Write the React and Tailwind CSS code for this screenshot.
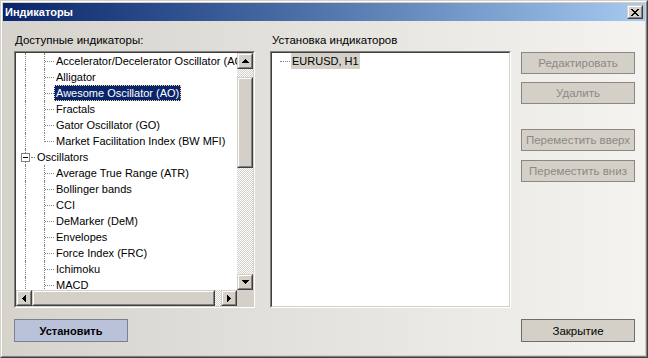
import React from "react";

const dot = "border-dotted border-[#808080]";

function Arrow({ dir }) {
  const rects = {
    up: [[3, 0, 1, 1], [2, 1, 3, 1], [1, 2, 5, 1], [0, 3, 7, 1]],
    down: [[0, 0, 7, 1], [1, 1, 5, 1], [2, 2, 3, 1], [3, 3, 1, 1]],
    left: [[3, 0, 1, 7], [2, 1, 1, 5], [1, 2, 1, 3], [0, 3, 1, 1]],
    right: [[0, 0, 1, 7], [1, 1, 1, 5], [2, 2, 1, 3], [3, 3, 1, 1]],
  }[dir];
  const vert = dir === "up" || dir === "down";
  const w = vert ? 7 : 4;
  const h = vert ? 4 : 7;
  return (
    <svg width={w} height={h} viewBox={`0 0 ${w} ${h}`} shapeRendering="crispEdges">
      {rects.map((r, i) => (
        <rect key={i} x={r[0]} y={r[1]} width={r[2]} height={r[3]} fill="#000" />
      ))}
    </svg>
  );
}

function Raised({ className = "", children }) {
  return (
    <div className={`border border-t-[#d4d0c8] border-l-[#d4d0c8] border-r-[#404040] border-b-[#404040] ${className}`}>
      <div className="w-full h-full border border-t-white border-l-white border-r-[#808080] border-b-[#808080] bg-[#d4d0c8] flex items-center justify-center">
        {children}
      </div>
    </div>
  );
}

const checker =
  "bg-[repeating-conic-gradient(#d4d0c8_0_25%,#ffffff_0_50%)] bg-[length:2px_2px]";

function VLine() {
  return (
    <div className="w-[19px] h-4 shrink-0 flex">
      <div className="w-[9px]" />
      <div className={`w-px h-full border-l ${dot}`} />
    </div>
  );
}

function Branch({ last }) {
  return (
    <div className="w-[19px] h-4 shrink-0 flex items-start">
      <div className="w-[9px] shrink-0" />
      <div className={`w-px shrink-0 ${last ? "h-[9px]" : "h-full"} border-l ${dot}`} />
      <div className={`w-[9px] h-[9px] border-b ${dot}`} />
    </div>
  );
}

function Expander() {
  return (
    <div className="w-[19px] h-4 shrink-0 flex items-start">
      <div className="ml-[5px] w-[9px] h-full flex flex-col items-center shrink-0">
        <div className={`w-px h-[4px] border-l ${dot}`} />
        <div className="w-[9px] h-[9px] border border-[#808080] bg-white flex items-center justify-center shrink-0">
          <div className="w-[5px] h-px bg-black" />
        </div>
        <div className={`w-px flex-1 border-l ${dot}`} />
      </div>
      <div className="w-px shrink-0" />
      <div className={`flex-1 h-[9px] border-b ${dot}`} />
    </div>
  );
}

function Row({ children }) {
  return <div className="flex h-4 items-center whitespace-nowrap">{children}</div>;
}

function Label({ text, selected }) {
  return (
    <span
      className={`px-[2px] h-4 leading-4 whitespace-nowrap ${
        selected
          ? "bg-[#0a246a] text-white outline-1 outline-dotted outline-[#f5db95] -outline-offset-1"
          : "text-black"
      }`}
    >
      {text}
    </span>
  );
}

const group1 = [
  "Accelerator/Decelerator Oscillator (AC)",
  "Alligator",
  "Awesome Oscillator (AO)",
  "Fractals",
  "Gator Oscillator (GO)",
  "Market Facilitation Index (BW MFI)",
];

const oscillators = [
  "Average True Range (ATR)",
  "Bollinger bands",
  "CCI",
  "DeMarker (DeM)",
  "Envelopes",
  "Force Index (FRC)",
  "Ichimoku",
  "MACD",
];

function Sunken({ className = "", children }) {
  return (
    <div className={`border border-t-[#808080] border-l-[#808080] border-r-white border-b-white ${className}`}>
      <div className="w-full h-full border border-t-[#404040] border-l-[#404040] border-r-[#d4d0c8] border-b-[#d4d0c8] bg-white overflow-hidden">
        {children}
      </div>
    </div>
  );
}

function LeftTree() {
  return (
    <Sunken className="w-[241px] h-[257px]">
      <div className="flex flex-col h-full">
        <div className="flex flex-1 min-h-0">
          <div className="flex-1 min-w-0 overflow-hidden">
            {group1.map((t, i) => (
              <Row key={t}>
                <VLine />
                <Branch last={i === group1.length - 1} />
                <Label text={t} selected={t === "Awesome Oscillator (AO)"} />
              </Row>
            ))}
            <Row>
              <Expander />
              <Label text="Oscillators" />
            </Row>
            {oscillators.map((t) => (
              <Row key={t}>
                <VLine />
                <Branch />
                <Label text={t} />
              </Row>
            ))}
          </div>
          <div className="w-4 shrink-0 flex flex-col">
            <Raised className="w-4 h-4 shrink-0">
              <Arrow dir="up" />
            </Raised>
            <div className={`flex-1 ${checker} flex flex-col`}>
              <Raised className="mt-[8px] w-4 h-[91px]" />
            </div>
            <Raised className="w-4 h-4 shrink-0">
              <Arrow dir="down" />
            </Raised>
          </div>
        </div>
        <div className="flex h-4 shrink-0">
          <Raised className="w-4 h-4 shrink-0">
            <Arrow dir="left" />
          </Raised>
          <div className={`flex-1 ${checker} flex`}>
            <Raised className="w-[183px] h-4" />
          </div>
          <Raised className="w-4 h-4 shrink-0">
            <Arrow dir="right" />
          </Raised>
          <div className="w-4 h-4 bg-[#d4d0c8] shrink-0" />
        </div>
      </div>
    </Sunken>
  );
}

function RightTree() {
  return (
    <Sunken className="w-[241px] h-[257px]">
      <Row>
        <div className="w-[8px] shrink-0" />
        <div className={`w-[10px] h-[9px] self-start border-b ${dot}`} />
        <span className="ml-[1px] px-[1px] h-4 leading-4 bg-[#d4d0c8] text-black">EURUSD, H1</span>
      </Row>
    </Sunken>
  );
}

function DisabledBtn({ text, className = "" }) {
  return (
    <div
      className={`w-[114px] h-[22px] border border-[#8a8883] bg-[#d4d0c8] text-[#8b8985] text-[11.5px] flex items-center justify-center ${className}`}
    >
      {text}
    </div>
  );
}

export default function App() {
  return (
    <div className="w-[648px] h-[358px] font-['Liberation_Sans',Arial,sans-serif] text-[11px] leading-[14px] border border-t-[#d4d0c8] border-l-[#d4d0c8] border-r-[#404040] border-b-[#404040]">
      <div className="w-full h-full border border-t-white border-l-white border-r-[#808080] border-b-[#808080] bg-[#d4d0c8] p-px flex flex-col">
        <div className="h-[18px] shrink-0 bg-gradient-to-r from-[#0a246a] to-[#a6caf0] flex items-center justify-between pl-[2px] pr-[2px]">
          <span className="text-white font-bold text-[11px]">Индикаторы</span>
          <Raised className="w-[16px] h-[14px]">
            <svg width="8" height="7" viewBox="0 0 8 7" shapeRendering="crispEdges">
              {[0, 1, 2, 3, 4, 5, 6].map((i) => (
                <React.Fragment key={i}>
                  <rect x={i} y={i} width="2" height="1" fill="#000" />
                  <rect x={6 - i} y={i} width="2" height="1" fill="#000" />
                </React.Fragment>
              ))}
            </svg>
          </Raised>
        </div>
        <div className="flex-1 bg-gradient-to-r from-[#d6d3cd] to-[#f4f3ef] pt-[12px] pl-[11px]">
          <div className="flex">
            <div className="w-[241px] flex flex-col">
              <div className="h-[14px] pl-px text-black text-[11.5px]">Доступные индикаторы:</div>
              <div className="mt-[4px]">
                <LeftTree />
              </div>
              <div className="mt-[11px] w-[114px] h-[23px] bg-[#bac2d9] border border-[#7b8090] flex items-center justify-center font-bold text-black">
                Установить
              </div>
            </div>
            <div className="ml-[15px] w-[241px] flex flex-col">
              <div className="h-[14px] pl-[2px] text-black text-[11.5px]">Установка индикаторов</div>
              <div className="mt-[4px]">
                <RightTree />
              </div>
            </div>
            <div className="ml-[10px] w-[114px] flex flex-col pt-[19px]">
              <DisabledBtn text="Редактировать" />
              <DisabledBtn text="Удалить" className="mt-[8px]" />
              <DisabledBtn text="Переместить вверх" className="mt-[25px]" />
              <DisabledBtn text="Переместить вниз" className="mt-[9px]" />
              <div className="mt-auto w-[114px] h-[23px] border border-[#6d6d6b] bg-[#d4d0c8] text-black text-[11.5px] flex items-center justify-center">
                Закрытие
              </div>
            </div>
          </div>
        </div>
      </div>
    </div>
  );
}
